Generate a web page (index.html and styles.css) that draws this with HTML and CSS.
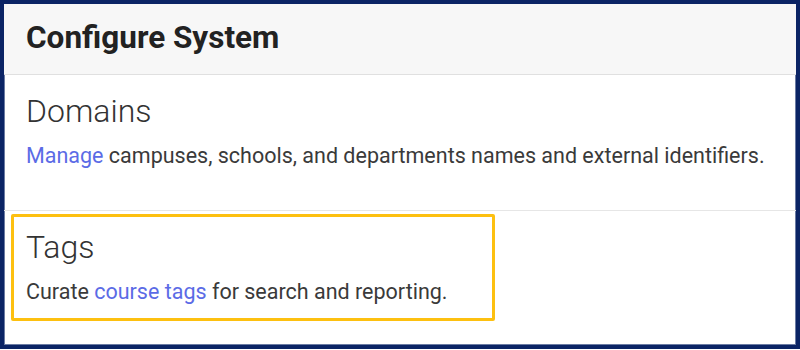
FILE: index.html
```html
<!DOCTYPE html>
<html lang="en">
<head>
    <meta charset="UTF-8">
    <meta name="viewport" content="width=device-width, initial-scale=1.0">
    <title>Configure System</title>
    <link rel="stylesheet" href="styles.css">
</head>
<body>

    <div class="card">
        <div class="card-header">
            <h1 class="card-title">Configure System</h1>
        </div>
        <div class="section">
            <h2 class="section-title">Domains</h2>
            <p class="section-text"><a href="#">Manage</a> campuses, schools, and departments names and external identifiers.</p>
        </div>
        <div class="section section-tags">
            <div class="highlight">
                <h2 class="section-title">Tags</h2>
                <p class="section-text">Curate <a href="#">course tags</a> for search and reporting.</p>
            </div>
        </div>
    </div>

</body>
</html>
```

FILE: styles.css
```css
body {
    margin: 0;
    background: #ffffff;
    font-family: Roboto, "Liberation Sans", sans-serif;
}

.card {
    box-sizing: border-box;
    width: 800px;
    height: 349px;
    border: 4px solid #0b2465;
    box-shadow: inset 0 0 0 1px #6b7ba3;
    background: #ffffff;
}

.card-header {
    background: #f7f7f7;
    border-bottom: 1px solid #e0e0e0;
    padding: 15px 22px 17px;
}

.card-title {
    margin: 0;
    font-size: 31.5px;
    line-height: 38px;
    font-weight: 700;
    color: #222222;
}

.section {
    padding: 16px 22px 39px;
    border-bottom: 1px solid #e6e6e6;
}

.section-title {
    margin: 0;
    font-size: 32px;
    line-height: 40px;
    font-weight: 300;
    color: #333333;
}

.section-text {
    margin: 10px 0 0;
    font-size: 21.5px;
    line-height: 30px;
    color: #3a3a3a;
}

.section-text a {
    color: #5b6be6;
    text-decoration: none;
}

.section-tags {
    padding: 3px 0 0 7px;
    border-bottom: none;
}

.highlight {
    box-sizing: border-box;
    width: 484px;
    border: 3px solid #fdc010;
    border-radius: 2px;
    padding: 10px 0 11px 12px;
}
```
